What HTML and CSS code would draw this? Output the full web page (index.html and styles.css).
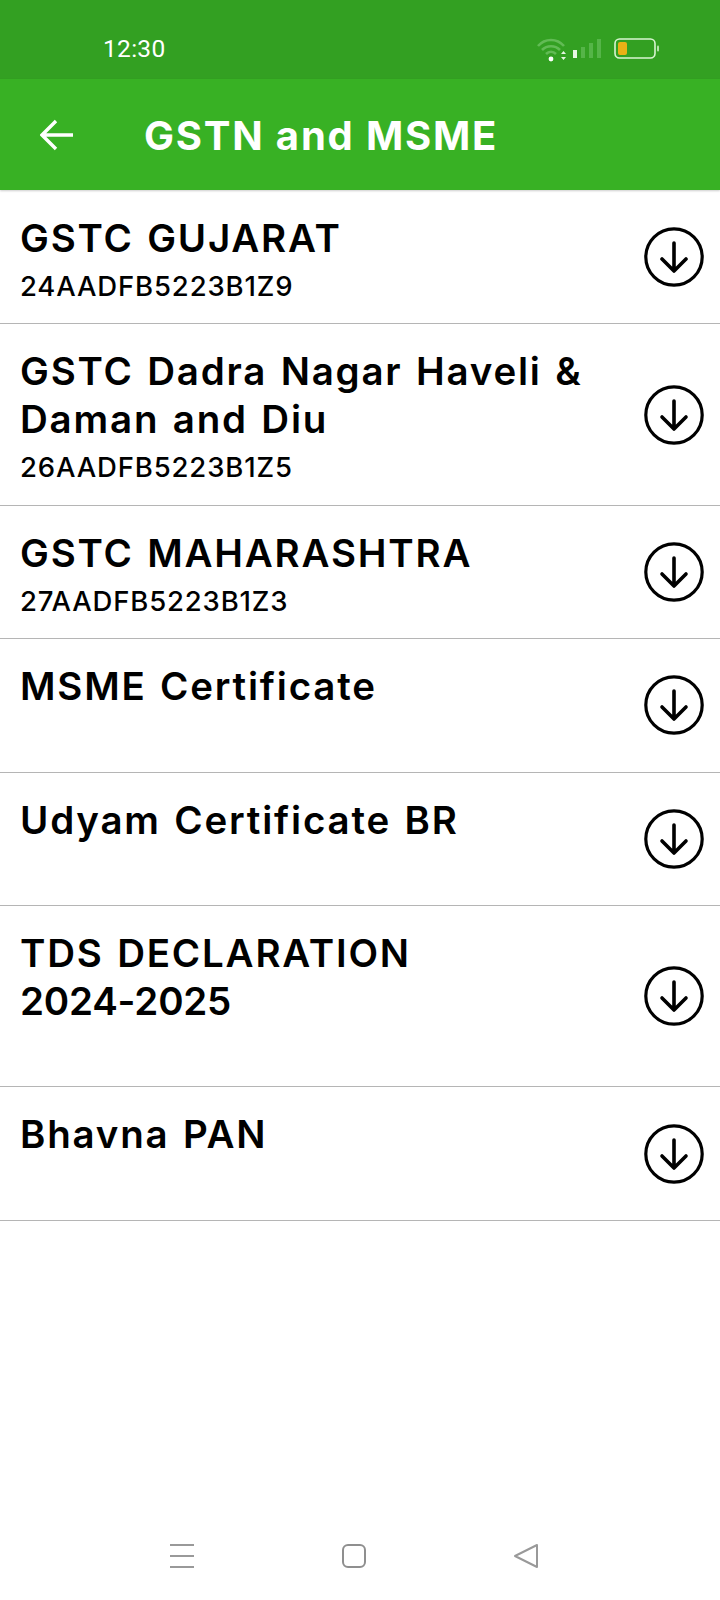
FILE: index.html
```html
<!DOCTYPE html>
<html lang="en">
<head>
<meta charset="utf-8">
<title>GSTN and MSME</title>
<link rel="stylesheet" href="styles.css">
</head>
<body>
<div class="screen">
  <header class="status">
    <span class="time">12:30</span>
    <div class="status-icons">
      <svg class="ic-wifi" width="34" height="26" viewBox="0 0 34 26" fill="none">
        <path d="M2 10C9 2 21 2 28 10" stroke="#62bb55" stroke-width="2.6"/>
        <path d="M6 14C11 9 19 9 24 14" stroke="#62bb55" stroke-width="2.6"/>
        <path d="M10 18C13 15 17 15 20 18" stroke="#62bb55" stroke-width="2.6"/>
        <circle cx="15" cy="23" r="2.4" fill="#fff"/>
        <path d="M25 18l2.5-3 2.5 3zM25 21l2.5 3 2.5-3z" fill="#e6f5e2"/>
      </svg>
      <svg class="ic-signal" width="30" height="22" viewBox="0 0 30 22">
        <rect x="0" y="12" width="4" height="8" fill="#e8f7e4"/>
        <rect x="8" y="9" width="4" height="11" fill="#55b548"/>
        <rect x="16" y="5" width="4" height="15" fill="#55b548"/>
        <rect x="24" y="1" width="4" height="19" fill="#55b548"/>
      </svg>
      <svg class="ic-batt" width="46" height="22" viewBox="0 0 46 22" fill="none">
        <rect x="1" y="1" width="40" height="19" rx="4.5" stroke="#d9f5d2" stroke-width="1.6"/>
        <rect x="4" y="4" width="9" height="13" rx="2" fill="#e9b116"/>
        <rect x="43" y="7.5" width="2" height="6" rx="1" fill="#b5e3ab"/>
      </svg>
    </div>
  </header>
  <div class="appbar">
    <svg class="back" width="34" height="32" viewBox="0 0 34 32" fill="none">
      <path d="M33 16H3M16 2L2 16l14 14" stroke="#fff" stroke-width="3.4"/>
    </svg>
    <h1 class="appbar-title">GSTN and MSME</h1>
  </div>
  <ul class="list">
    <li class="row"><div class="text"><div class="title">GSTC GUJARAT</div><div class="sub">24AADFB5223B1Z9</div></div>
      <svg class="dl" width="60" height="60" viewBox="0 0 60 60" fill="none"><circle cx="30" cy="30" r="28.2" stroke="#000" stroke-width="3.2"/><path d="M30 16V43M18 32L30 44L42 32" stroke="#000" stroke-width="3.6" stroke-linecap="round" stroke-linejoin="round"/></svg></li>
    <li class="row"><div class="text"><div class="title">GSTC Dadra Nagar Haveli &amp;<br>Daman and Diu</div><div class="sub">26AADFB5223B1Z5</div></div>
      <svg class="dl" width="60" height="60" viewBox="0 0 60 60" fill="none"><circle cx="30" cy="30" r="28.2" stroke="#000" stroke-width="3.2"/><path d="M30 16V43M18 32L30 44L42 32" stroke="#000" stroke-width="3.6" stroke-linecap="round" stroke-linejoin="round"/></svg></li>
    <li class="row"><div class="text"><div class="title">GSTC MAHARASHTRA</div><div class="sub">27AADFB5223B1Z3</div></div>
      <svg class="dl" width="60" height="60" viewBox="0 0 60 60" fill="none"><circle cx="30" cy="30" r="28.2" stroke="#000" stroke-width="3.2"/><path d="M30 16V43M18 32L30 44L42 32" stroke="#000" stroke-width="3.6" stroke-linecap="round" stroke-linejoin="round"/></svg></li>
    <li class="row"><div class="text"><div class="title">MSME Certificate</div><div class="sub"></div></div>
      <svg class="dl" width="60" height="60" viewBox="0 0 60 60" fill="none"><circle cx="30" cy="30" r="28.2" stroke="#000" stroke-width="3.2"/><path d="M30 16V43M18 32L30 44L42 32" stroke="#000" stroke-width="3.6" stroke-linecap="round" stroke-linejoin="round"/></svg></li>
    <li class="row"><div class="text"><div class="title">Udyam Certificate BR</div><div class="sub"></div></div>
      <svg class="dl" width="60" height="60" viewBox="0 0 60 60" fill="none"><circle cx="30" cy="30" r="28.2" stroke="#000" stroke-width="3.2"/><path d="M30 16V43M18 32L30 44L42 32" stroke="#000" stroke-width="3.6" stroke-linecap="round" stroke-linejoin="round"/></svg></li>
    <li class="row"><div class="text"><div class="title">TDS DECLARATION<br><span class="year">2024-2025</span></div><div class="sub"></div></div>
      <svg class="dl" width="60" height="60" viewBox="0 0 60 60" fill="none"><circle cx="30" cy="30" r="28.2" stroke="#000" stroke-width="3.2"/><path d="M30 16V43M18 32L30 44L42 32" stroke="#000" stroke-width="3.6" stroke-linecap="round" stroke-linejoin="round"/></svg></li>
    <li class="row"><div class="text"><div class="title">Bhavna PAN</div><div class="sub"></div></div>
      <svg class="dl" width="60" height="60" viewBox="0 0 60 60" fill="none"><circle cx="30" cy="30" r="28.2" stroke="#000" stroke-width="3.2"/><path d="M30 16V43M18 32L30 44L42 32" stroke="#000" stroke-width="3.6" stroke-linecap="round" stroke-linejoin="round"/></svg></li>
  </ul>
  <nav class="navbar">
    <svg width="26" height="26" viewBox="0 0 26 26"><path d="M1 2H25M1 13H25M1 24H25" stroke="#999" stroke-width="2"/></svg>
    <svg width="26" height="26" viewBox="0 0 26 26" fill="none"><rect x="2" y="2" width="22" height="22" rx="5" stroke="#8f8f8f" stroke-width="2"/></svg>
    <svg width="26" height="26" viewBox="0 0 26 26" fill="none"><path d="M2 13L24 2V24Z" stroke="#999" stroke-width="2" stroke-linejoin="round"/></svg>
  </nav>
</div>
</body>
</html>
```
FILE: styles.css
```css
* { box-sizing: border-box; }
html, body { margin: 0; padding: 0; background: #fff; }
.screen {
  width: 720px; height: 1600px; display: flex; flex-direction: column;
  font-family: Inter, "Open Sans", "Liberation Sans", sans-serif; color: #000;
  overflow: hidden;
}
.status {
  height: 79px; background: #33a022; color: #fff;
  display: flex; align-items: center; justify-content: space-between;
  padding: 18px 60px 0 103px;
}
.time { font-family: Roboto, sans-serif; font-size: 24.5px; letter-spacing: .3px; }
.status-icons { display: flex; align-items: center; gap: 2px; }
.ic-signal { margin-left: 1px; margin-right: 9px; }
.appbar {
  height: 111px; background: #38b124; display: flex; align-items: center;
  padding-left: 40px; gap: 70px; box-shadow: 0 1px 2px rgba(0,0,0,.2);
}
.appbar-title { margin: 0; font-size: 40px; font-weight: 700; color: #fff; line-height: 1; letter-spacing: 1.8px; position: relative; top: 1px; }
.list { list-style: none; margin: 1px 0 0; padding: 0; }
.row {
  display: flex; align-items: center; justify-content: space-between;
  padding: 0 16px 0 20px; border-bottom: 1.5px solid #b5b5b5;
}
.text { flex: 1; padding: 23px 0 17.4px; }
.title { font-size: 38.5px; font-weight: 600; line-height: 48px; letter-spacing: 1.8px; word-spacing: 2px; }
.year { letter-spacing: -.2px; }
.sub { font-size: 27.5px; font-weight: 500; line-height: 36px; min-height: 44px; padding-top: 6px; letter-spacing: .85px; }
.dl { flex: none; }
.navbar {
  margin-top: auto; height: 78px; padding: 21px 181px 0 169px;
  display: flex; align-items: flex-start; justify-content: space-between;
}
```
